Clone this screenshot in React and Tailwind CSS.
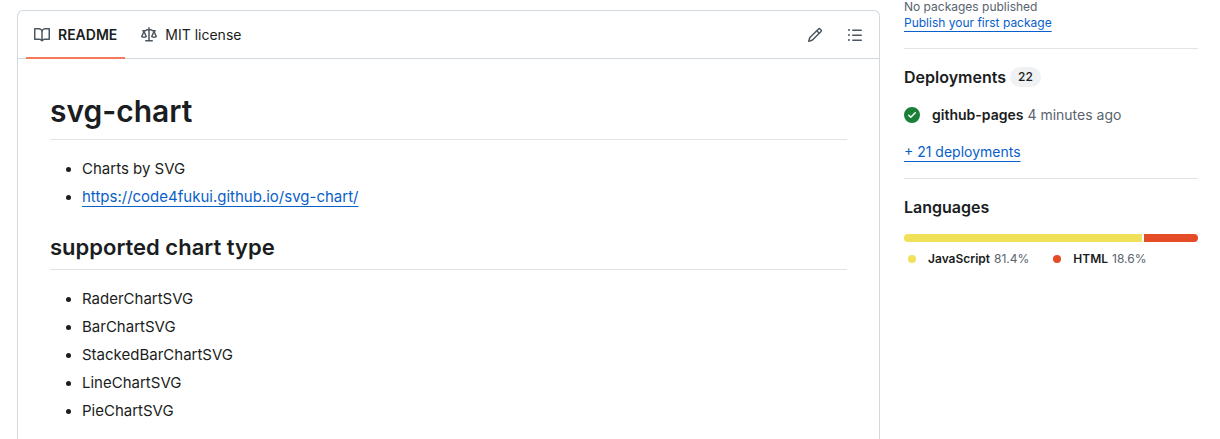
import React from 'react';

const icons = {
    book: 'M0 1.75A.75.75 0 0 1 .75 1h4.253c1.227 0 2.317.59 3 1.501A3.743 3.743 0 0 1 11.006 1h4.245a.75.75 0 0 1 .75.75v10.5a.75.75 0 0 1-.75.75h-4.507a2.25 2.25 0 0 0-1.591.659l-.622.621a.75.75 0 0 1-1.06 0l-.622-.621A2.25 2.25 0 0 0 5.258 13H.75a.75.75 0 0 1-.75-.75Zm7.251 10.324.004-5.073-.002-2.253A2.25 2.25 0 0 0 5.003 2.5H1.5v9h3.757a3.75 3.75 0 0 1 1.994.574ZM8.755 4.75l-.004 7.322a3.752 3.752 0 0 1 1.992-.572H14.5v-9h-3.495a2.25 2.25 0 0 0-2.25 2.25Z',
    law: 'M8.75.75V2h.985c.304 0 .603.08.867.231l1.29.736c.038.022.08.033.124.033h2.234a.75.75 0 0 1 0 1.5h-.427l2.111 4.692a.75.75 0 0 1-.154.838l-.53-.53.529.531-.001.002-.002.002-.006.006-.006.005-.01.01-.045.04c-.21.176-.441.327-.686.45C14.556 10.78 13.88 11 13 11a4.498 4.498 0 0 1-2.023-.454 3.544 3.544 0 0 1-.686-.45l-.045-.04-.016-.015-.006-.006-.004-.004v-.001a.75.75 0 0 1-.154-.838L12.178 4.5h-.162c-.305 0-.604-.079-.868-.231l-1.29-.736a.245.245 0 0 0-.124-.033H8.75V13h2.5a.75.75 0 0 1 0 1.5h-6.5a.75.75 0 0 1 0-1.5h2.5V3.5h-.984a.245.245 0 0 0-.124.033l-1.289.737c-.265.15-.564.23-.869.23h-.162l2.112 4.692a.75.75 0 0 1-.154.838l-.53-.53.529.531-.001.002-.002.002-.006.006-.016.015-.045.04c-.21.176-.441.327-.686.45C4.556 10.78 3.88 11 3 11a4.498 4.498 0 0 1-2.023-.454 3.544 3.544 0 0 1-.686-.45l-.045-.04-.016-.015-.006-.006-.004-.004v-.001a.75.75 0 0 1-.154-.838L2.178 4.5H1.75a.75.75 0 0 1 0-1.5h2.234a.249.249 0 0 0 .125-.033l1.288-.737c.265-.15.564-.23.869-.23h.984V.75a.75.75 0 0 1 1.5 0Zm2.945 8.477c.285.135.718.273 1.305.273s1.02-.138 1.305-.273L13 6.327Zm-10 0c.285.135.718.273 1.305.273s1.02-.138 1.305-.273L3 6.327Z',
    pencil: 'M11.013 1.427a1.75 1.75 0 0 1 2.474 0l1.086 1.086a1.75 1.75 0 0 1 0 2.474l-8.61 8.61c-.21.21-.47.364-.756.445l-3.251.93a.75.75 0 0 1-.927-.928l.929-3.25c.081-.286.235-.547.445-.758l8.61-8.61Zm.176 4.823L9.75 4.81l-6.286 6.287a.253.253 0 0 0-.064.108l-.558 1.953 1.953-.558a.253.253 0 0 0 .108-.064Zm1.238-3.763a.25.25 0 0 0-.354 0L10.811 3.75l1.439 1.44 1.263-1.263a.25.25 0 0 0 0-.354Z',
    list: 'M5.75 2.5h8.5a.75.75 0 0 1 0 1.5h-8.5a.75.75 0 0 1 0-1.5Zm0 5h8.5a.75.75 0 0 1 0 1.5h-8.5a.75.75 0 0 1 0-1.5Zm0 5h8.5a.75.75 0 0 1 0 1.5h-8.5a.75.75 0 0 1 0-1.5ZM2 14a1 1 0 1 1 0-2 1 1 0 0 1 0 2Zm1-6a1 1 0 1 1-2 0 1 1 0 0 1 2 0ZM2 4a1 1 0 1 1 0-2 1 1 0 0 1 0 2Z',
    check: 'M8 16A8 8 0 1 1 8 0a8 8 0 0 1 0 16Zm3.78-9.72a.751.751 0 0 0-.018-1.042.751.751 0 0 0-1.042-.018L6.75 9.19 5.28 7.72a.751.751 0 0 0-1.042.018.751.751 0 0 0-.018 1.042l2 2a.75.75 0 0 0 1.06 0Z'
};

const chartTypes = [
    'RaderChartSVG',
    'BarChartSVG',
    'StackedBarChartSVG',
    'LineChartSVG',
    'PieChartSVG'
];

const languages = [
    { name: 'JavaScript', percent: 81.4, color: '#f1e05a' },
    { name: 'HTML', percent: 18.6, color: '#e34c26' }
];

const Icon = ({ name, className = '' }) => (
    <svg viewBox="0 0 16 16" fill="currentColor" aria-hidden="true" className={`size-4 shrink-0 ${className}`}>
        <path d={icons[name]} />
    </svg>
);

const Readme = () => {
    return (
        <main className="flex-1 min-w-0 mt-[10px] border border-b-0 border-[#d1d9e0] rounded-t-md">
            <div className="flex items-center justify-between h-12 px-2 border-b border-[#d1d9e0]">
                <nav className="flex self-stretch gap-2 text-sm">
                    <a href="#readme" className="flex items-center gap-2 px-2 pt-0.5 -mb-px border-b-2 border-[#f5795b] font-semibold">
                        <Icon name="book" className="text-[#4d5761]" />
                        README
                    </a>
                    <a href="#license" className="flex items-center gap-2 px-2 pt-0.5 -mb-px border-b-2 border-transparent">
                        <Icon name="law" className="text-[#4d5761]" />
                        MIT license
                    </a>
                </nav>
                <div className="flex gap-2 text-[#4d5761]">
                    <button type="button" aria-label="Edit file" className="flex items-center justify-center size-8">
                        <Icon name="pencil" />
                    </button>
                    <button type="button" aria-label="Outline" className="flex items-center justify-center size-8">
                        <Icon name="list" />
                    </button>
                </div>
            </div>

            <article className="p-8 text-[15px] leading-6">
                <h1 className="mb-4 pb-2 border-b border-[#d1d9e0b3] text-[30px] leading-10 font-semibold">svg-chart</h1>
                <ul className="mb-6 pt-px pl-8 list-disc space-y-1 marker:text-sm">
                    <li>Charts by SVG</li>
                    <li>
                        <a href="https://code4fukui.github.io/svg-chart/" className="text-[#0860ca] underline underline-offset-4">
                            https://code4fukui.github.io/svg-chart/
                        </a>
                    </li>
                </ul>
                <h2 className="mb-4 pb-2 border-b border-[#d1d9e0b3] text-[22px] leading-7 font-semibold">supported chart type</h2>
                <ul className="pt-px pl-8 list-disc space-y-1 marker:text-sm">
                    {chartTypes.map((type) => (
                        <li key={type}>{type}</li>
                    ))}
                </ul>
            </article>
        </main>
    );
};

const Sidebar = () => {
    return (
        <aside className="w-[294px] shrink-0 text-sm">
            <section className="pb-4 border-b border-[#d1d9e0b3] text-xs text-[#59636e]">
                <p className="leading-[14px]">No packages published</p>
                <a href="#packages" className="block w-fit leading-[18px] text-[#0860ca] underline underline-offset-4">Publish your first package</a>
            </section>

            <section className="py-4 border-b border-[#d1d9e0b3]">
                <h2 className="flex items-center gap-1 mb-4 text-base font-semibold">
                    Deployments
                    <span className="px-2 rounded-full bg-[#eff1f3] text-xs leading-5 font-medium">22</span>
                </h2>
                <div className="flex items-center mb-4 leading-5">
                    <Icon name="check" className="mr-3 text-[#1a7f37]" />
                    <a href="#github-pages" className="mr-1 font-semibold">github-pages</a>
                    <span className="text-[#59636e]">4 minutes ago</span>
                </div>
                <a href="#deployments" className="block w-fit leading-[21px] text-[#0860ca] underline underline-offset-4">+ 21 deployments</a>
            </section>

            <section className="py-4">
                <h2 className="mb-[15px] text-base font-semibold">Languages</h2>
                <div className="flex gap-[2px] h-2 mb-2 rounded-full overflow-hidden">
                    {languages.map((lang) => (
                        <span key={lang.name} style={{ width: `${lang.percent}%`, backgroundColor: lang.color }} />
                    ))}
                </div>
                <ul className="flex gap-5 text-xs leading-[18px]">
                    {languages.map((lang) => (
                        <li key={lang.name} className="flex items-center">
                            <span className="size-2 ml-1 mr-3 rounded-full" style={{ backgroundColor: lang.color }} />
                            <span className="mr-1 font-semibold">{lang.name}</span>
                            <span className="text-[#59636e]">{lang.percent}%</span>
                        </li>
                    ))}
                </ul>
            </section>
        </aside>
    );
};

const App = () => {
    return (
        <div className="flex gap-6 min-h-screen pl-[17px] pr-[22px] overflow-hidden bg-white text-[#1a1d21] font-[Inter,sans-serif]">
            <Readme />
            <Sidebar />
        </div>
    );
};

export default App;
